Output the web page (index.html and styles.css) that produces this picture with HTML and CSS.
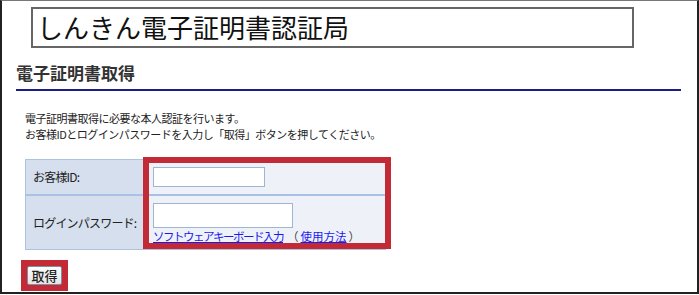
FILE: index.html
```html
<!DOCTYPE html>
<html lang="ja">
<head>
<meta charset="utf-8">
<title>しんきん電子証明書認証局</title>
<link rel="stylesheet" href="styles.css">
</head>
<body>
<div class="frame">
  <div class="title-box">しんきん電子証明書認証局</div>
  <h1 class="heading">電子証明書取得</h1>
  <p class="desc">電子証明書取得に必要な本人認証を行います。<br>お客様IDとログインパスワードを入力し「取得」ボタンを押してください。</p>
  <div class="form-area">
    <table class="auth">
      <tr class="row-id">
        <th class="label">お客様ID:</th>
        <td class="value"><input class="field field-id" type="text"></td>
      </tr>
      <tr class="row-pw">
        <th class="label">ログインパスワード:</th>
        <td class="value">
          <input class="field field-pw" type="password">
          <div class="links"><a href="#" class="link link-kb">ソフトウェアキーボード入力</a><span class="paren paren-open">（</span><a href="#" class="link link-help">使用方法</a><span class="paren paren-close">）</span></div>
        </td>
      </tr>
    </table>
    <div class="mark mark-fields"></div>
  </div>
  <div class="btn-mark"><button class="btn" type="button">取得</button></div>
</div>
</body>
</html>
```
FILE: styles.css
```css
html, body {
  margin: 0;
  padding: 0;
  background: #fff;
}
body {
  font-family: "Noto Sans CJK JP", "Noto Sans", sans-serif;
  color: #333;
}
.frame {
  box-sizing: border-box;
  width: 699px;
  height: 294px;
  border-top: 1px solid #777;
  border-left: 2px solid #222;
  border-right: 2px solid #222;
  border-bottom: 2px solid #222;
  padding-top: 6px;
  overflow: hidden;
}
.title-box {
  box-sizing: border-box;
  margin-left: 29px;
  width: 603px;
  height: 41px;
  border: 2px solid #666;
  padding-left: 4px;
  font-size: 26px;
  line-height: 36px;
  color: #111;
}
.heading {
  margin: 15px 16px 0 14px;
  padding-bottom: 6px;
  border-bottom: 2px solid #1c1c8a;
  font-size: 17px;
  line-height: 20px;
  font-weight: bold;
  color: #333;
}
.desc {
  margin: 19px 0 0 23px;
  font-size: 11px;
  line-height: 16px;
  color: #222;
  letter-spacing: -0.5px;
}
.form-area {
  position: relative;
  margin: 17px 0 0 23px;
  width: 362px;
}
.auth {
  border-collapse: collapse;
  width: 361px;
}
.label {
  box-sizing: border-box;
  width: 118px;
  background: #d6dfee;
  border: 1px solid #adc2e0;
  text-align: left;
  font-weight: normal;
  font-size: 12px;
  color: #222;
  padding: 0 0 0 7px;
  letter-spacing: -0.8px;
  vertical-align: middle;
}
.value {
  background: #eef1f7;
  border: 1px solid #adc2e0;
  padding: 7px 10px 5px 9px;
  vertical-align: top;
}
.row-id .label, .row-id .value {
  height: 35px;
  box-sizing: border-box;
  border-bottom: 2px solid #a9c1e6;
}
.row-pw .label, .row-pw .value {
  height: 53px;
  box-sizing: border-box;
}
.field {
  display: block;
  box-sizing: border-box;
  margin: 0;
  padding: 0 2px;
  background: #fff;
  border: 1px solid #9fb6d2;
  font-size: 12px;
}
.field-id {
  width: 112px;
  height: 20px;
}
.field-pw {
  width: 140px;
  height: 25px;
}
.links {
  font-size: 11.5px;
  line-height: 16px;
  white-space: nowrap;
}
.link {
  color: #1a1aee;
  text-decoration: underline;
}
.link-kb {
  letter-spacing: -1.5px;
}
.link-help {
  letter-spacing: 0;
}
.paren {
  color: #444;
}
.paren-open {
  margin: 0 2px 0 4px;
}
.paren-close {
  margin: 0 0 0 2px;
}
.mark {
  position: absolute;
  box-sizing: border-box;
  border: 6px solid #c22a35;
  pointer-events: none;
}
.mark-fields {
  left: 118px;
  top: -2px;
  width: 248px;
  height: 92px;
}
.btn-mark {
  display: inline-block;
  margin: 10px 0 0 19px;
  padding: 6px;
  background: #c22a35;
  line-height: 0;
}
.btn {
  box-sizing: border-box;
  width: 35px;
  height: 19px;
  margin: 0;
  padding: 0;
  border: 1px solid #7d8ea6;
  border-radius: 2px;
  background: linear-gradient(#fdfdfd, #e4e4e4);
  font-family: "Noto Sans CJK JP", sans-serif;
  font-size: 13px;
  line-height: 15px;
  font-weight: 500;
  color: #222;
}
```
